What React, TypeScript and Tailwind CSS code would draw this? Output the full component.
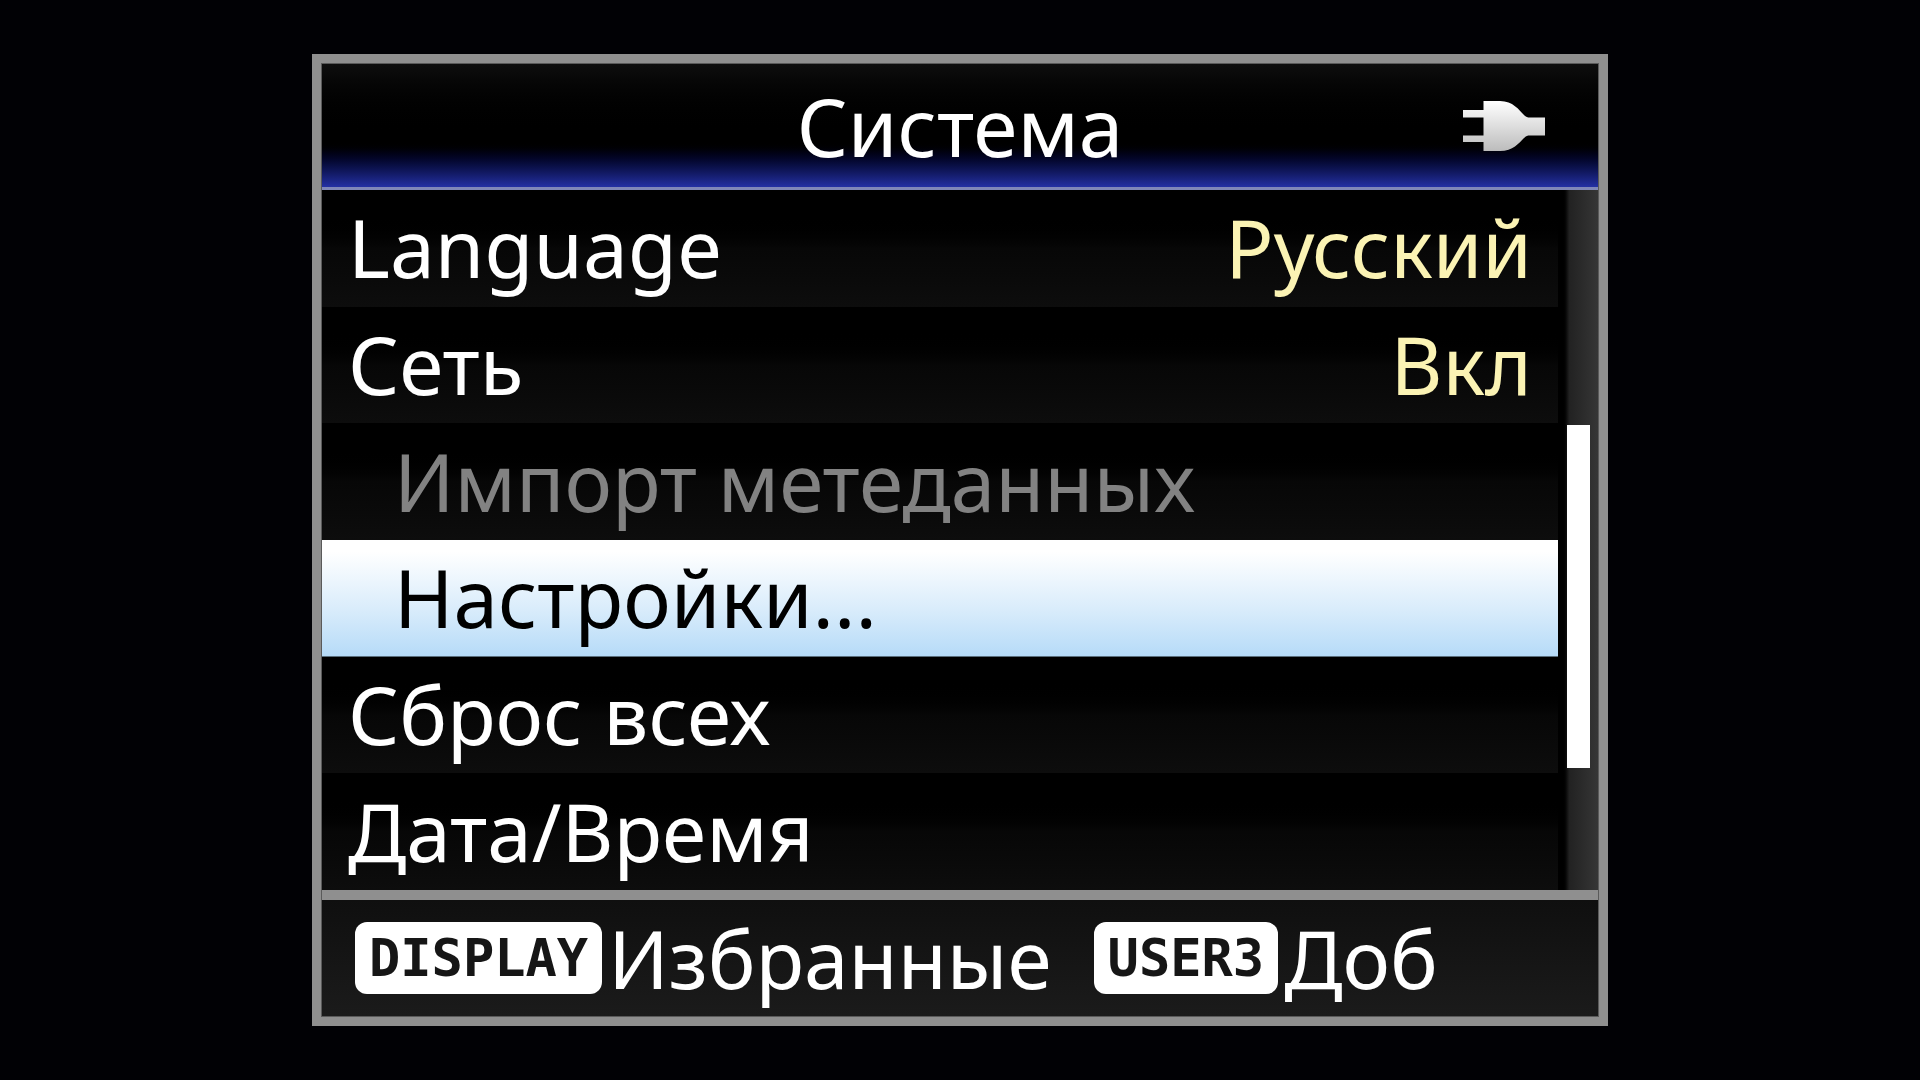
type Row = {
  label: string;
  value?: string;
  indented?: boolean;
  disabled?: boolean;
  selected?: boolean;
};

const rows: Row[] = [
  { label: "Language", value: "Русский" },
  { label: "Сеть", value: "Вкл" },
  { label: "Импорт метеданных", indented: true, disabled: true },
  { label: "Настройки...", indented: true, selected: true },
  { label: "Сброс всех" },
  { label: "Дата/Время" },
];

const hints = [
  { key: "DISPLAY", label: "Избранные" },
  { key: "USER3", label: "Доб" },
];

function PlugIcon() {
  return (
    <svg viewBox="0 0 82 50" className="h-[50px] w-[82px]" role="img" aria-label="Питание от сети">
      <defs>
        <linearGradient id="plug" x1="0" y1="0" x2="0" y2="50" gradientUnits="userSpaceOnUse">
          <stop offset="0" stopColor="#ffffff" />
          <stop offset="0.5" stopColor="#dedede" />
          <stop offset="1" stopColor="#bcbcbc" />
        </linearGradient>
      </defs>
      <path
        fill="url(#plug)"
        d="M0 9H20.500V0H37C50 0 56 9 61 14C63 16 64.500 16.500 67 16.500H82V34.500H67C64.500 34.500 63 35 61 37C56 42 50 50 37 50H20.500V41H0V34.500H20.500V16.500H0Z"
      />
    </svg>
  );
}

function MenuRow({ row }: { row: Row }) {
  const background = row.selected
    ? "bg-linear-to-b from-white from-10% via-[#d9ecfb] via-60% to-[#b6dbf8] border-b border-[#5b6f7d]"
    : "bg-linear-to-b from-black from-20% via-[#070707] via-50% to-[#0d0d0d]";
  const color = row.selected ? "text-black" : row.disabled ? "text-[#828282]" : "text-white";
  return (
    <li className="grid">
      <button
        type="button"
        disabled={row.disabled}
        aria-current={row.selected ? "true" : undefined}
        className={`flex items-center justify-between pr-[26px] pb-0.5 text-left ${row.indented ? "pl-[72px]" : "pl-[26px]"} ${background} ${color}`}
      >
        <span>{row.label}</span>
        {row.value && <span className="text-[#fbf3b4]">{row.value}</span>}
      </button>
    </li>
  );
}

export default function App() {
  return (
    <div className="flex min-h-screen items-center justify-center bg-[#010105] font-['Noto_Sans',sans-serif] text-[80px] leading-[112px] whitespace-nowrap text-white">
      <main className="flex min-h-[90vh] w-[67.5%] flex-col border-9 border-[#8f8f8f] bg-[#5a5a5a] p-px">
        <header className="grid h-[126px] grid-cols-[1fr_auto_1fr] items-center border-b-3 border-[#8087b8] bg-linear-to-b from-[#0e0e0e] via-black via-62% to-[#2430a4]">
          <h1 className="col-start-2">Система</h1>
          <div className="flex justify-end pr-[53px]">
            <PlugIcon />
          </div>
        </header>

        <div className="flex flex-1 bg-black">
          <ul id="menu" className="grid flex-1 auto-rows-fr">
            {rows.map((row) => (
              <MenuRow key={row.label} row={row} />
            ))}
          </ul>
          <div
            role="scrollbar"
            aria-orientation="vertical"
            aria-valuenow={50}
            aria-controls="menu"
            className="ml-1 flex w-9 flex-col bg-linear-to-r from-black via-[#222222] via-20% to-[#363636] pr-2 pl-[5px]"
          >
            <div className="grow-[235]" />
            <div className="grow-[343] bg-white" />
            <div className="grow-[122]" />
          </div>
        </div>

        <footer className="flex h-[126px] items-center gap-[42px] border-t-10 border-[#8f8f8f] bg-linear-to-b from-[#0f0f0f] to-[#1b1b1b] pl-[33px]">
          {hints.map((hint) => (
            <button key={hint.key} type="button" className="flex items-center gap-1.5">
              <kbd className="rounded-xl bg-white px-[14px] font-['DejaVu_Sans_Mono',monospace] text-[52px] leading-[72px] font-bold text-[#161616]">
                {hint.key}
              </kbd>
              <span>{hint.label}</span>
            </button>
          ))}
        </footer>
      </main>
    </div>
  );
}
